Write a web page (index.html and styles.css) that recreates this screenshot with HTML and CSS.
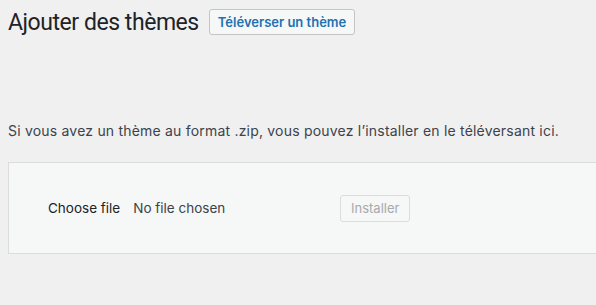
FILE: index.html
```html
<!DOCTYPE html>
<html lang="fr">
<head>
    <meta charset="UTF-8">
    <title>Ajouter des thèmes</title>
    <link rel="stylesheet" href="styles.css">
</head>
<body>
    <div class="wrap">
        <div class="title-row">
            <h1 class="page-title">Ajouter des thèmes</h1>
            <a href="#" class="page-title-action">Téléverser un thème</a>
        </div>
        <div class="upload-theme">
            <p class="install-help">Si vous avez un thème au format .zip, vous pouvez l’installer en le téléversant ici.</p>
            <form class="wp-upload-form">
                <label class="file-input">
                    <span class="choose">Choose file</span>
                    <span class="chosen">No file chosen</span>
                </label>
                <button type="button" class="button" disabled>Installer</button>
            </form>
        </div>
    </div>
</body>
</html>
```
FILE: styles.css
```css
body {
    margin: 0;
    background: #f0f0f1;
    color: #3c434a;
    font-family: Inter, "Noto Sans", sans-serif;
    font-size: 13px;
}
.wrap {
    padding: 9px 0 0 8px;
}
.title-row {
    display: flex;
    align-items: center;
    gap: 10px;
    height: 26px;
}
.page-title {
    margin: 0;
    font-family: Roboto, Inter, sans-serif;
    font-size: 23px;
    font-weight: 400;
    letter-spacing: -0.45px;
    color: #1d2327;
}
.page-title-action {
    display: inline-flex;
    align-items: center;
    height: 24px;
    padding: 0 8px;
    border: 1px solid #c3c4c7;
    border-radius: 3px;
    background: #f6f7f7;
    color: #2271b1;
    font-weight: 600;
    font-size: 13px;
    text-decoration: none;
}
.install-help {
    margin: 87px 0 0;
    font-size: 14px;
    letter-spacing: 0.2px;
}
.wp-upload-form {
    display: flex;
    align-items: center;
    margin-top: 23px;
    height: 90px;
    padding: 0 0 0 39px;
    background: #f6f7f7;
    border: 1px solid #dcdcde;
    border-right: none;
    font-size: 13.5px;
}
.file-input {
    display: flex;
    gap: 13px;
    width: 292px;
}
.choose {
    color: #1d2327;
}
.button {
    height: 27px;
    padding: 0 10px;
    border: 1px solid #dcdcde;
    border-radius: 3px;
    background: #f6f7f7;
    color: #a7aaad;
    font-family: inherit;
    font-size: 13px;
}
```
